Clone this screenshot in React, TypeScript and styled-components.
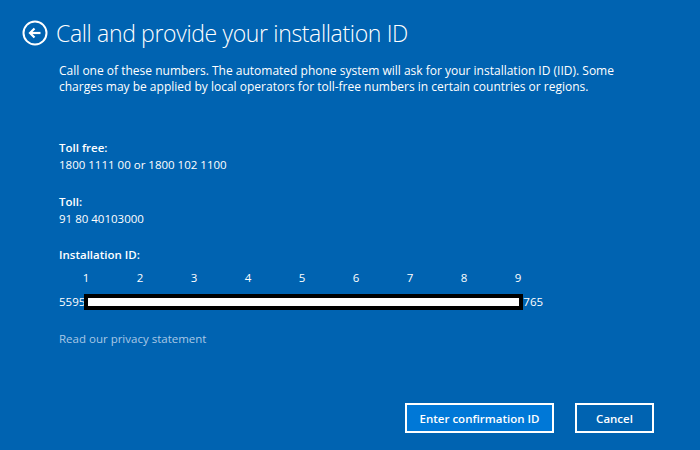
import React from 'react'
import styled, { createGlobalStyle } from 'styled-components'

const GlobalStyle = createGlobalStyle`
    html, body {
        margin: 0;
        padding: 0;
        background: #0063b1;
    }
    body {
        font-family: 'Open Sans', 'Noto Sans', sans-serif;
        color: #ffffff;
    }
`

// Styled Components
const Page = styled.div`
    width: 700px;
    height: 450px;
    box-sizing: border-box;
    display: flex;
    flex-direction: column;
    background: #0063b1;
    padding: 19px 0 0 0;
    overflow: hidden;
`

const Header = styled.div`
    display: flex;
    flex-direction: row;
    align-items: center;
    gap: 8px;
    padding-left: 22px;
    height: 28px;
`

const BackButton = styled.button`
    display: flex;
    align-items: center;
    justify-content: center;
    width: 26px;
    height: 26px;
    padding: 0;
    border: none;
    background: transparent;
    cursor: pointer;
`

const Title = styled.h1`
    margin: 0;
    font-size: 23px;
    font-weight: 300;
    line-height: 28px;
    letter-spacing: -0.35px;
    white-space: nowrap;
`

const Content = styled.div`
    display: flex;
    flex-direction: column;
    padding-left: 59px;
    padding-right: 40px;
`

const Intro = styled.p`
    margin: 16px 0 0 0;
    font-size: 12px;
    line-height: 15.5px;
    max-width: 585px;
`

const Section = styled.div<{ $top: number }>`
    display: flex;
    flex-direction: column;
    margin-top: ${(p) => p.$top}px;
`

const Label = styled.div`
    font-size: 11.5px;
    font-weight: 600;
    line-height: 17px;
`

const Value = styled.div`
    font-size: 11.5px;
    line-height: 17px;
`

const GroupNumbers = styled.div`
    display: grid;
    grid-template-columns: repeat(9, 54px);
    margin-top: 6px;
    font-size: 11.5px;
    line-height: 17px;
`

const GroupNumber = styled.span`
    text-align: center;
`

const IdRow = styled.div`
    display: flex;
    flex-direction: row;
    align-items: center;
    margin-top: 7px;
    font-size: 11.5px;
    line-height: 17px;
`

const Redaction = styled.span`
    display: block;
    width: 439px;
    height: 16px;
    box-sizing: border-box;
    border: 4px solid #000000;
    background: #ffffff;
    margin-left: -1px;
`

const PrivacyLink = styled.a`
    margin-top: 20px;
    font-size: 11.5px;
    line-height: 17px;
    color: #a9c8e6;
    text-decoration: none;
    align-self: flex-start;
`

const Footer = styled.div`
    display: flex;
    flex-direction: row;
    justify-content: flex-end;
    gap: 21px;
    margin-top: auto;
    padding: 0 46px 17px 0;
`

const Button = styled.button<{ $primary?: boolean }>`
    height: 30px;
    min-width: ${(p) => (p.$primary ? 149 : 79)}px;
    padding: 0 10px;
    box-sizing: border-box;
    border: 2px solid #ffffff;
    background: ${(p) => (p.$primary ? '#0078d7' : '#0063b1')};
    color: #ffffff;
    font-family: 'Open Sans', 'Noto Sans', sans-serif;
    font-size: 11.5px;
    font-weight: 600;
    cursor: pointer;
`

const BackIcon = () => (
    <svg width="26" height="26" viewBox="0 0 26 26" fill="none">
        <circle cx="13" cy="13" r="11.5" stroke="#ffffff" strokeWidth="2" />
        <path d="M18.5 13H8.5" stroke="#ffffff" strokeWidth="2.2" />
        <path d="M12.5 8.5L8 13L12.5 17.5" stroke="#ffffff" strokeWidth="2.2" />
    </svg>
)

const App: React.FC = (): JSX.Element => {
    const groups = [1, 2, 3, 4, 5, 6, 7, 8, 9]

    return (
        <>
            <GlobalStyle />
            <Page>
                <Header>
                    <BackButton aria-label="Back">
                        <BackIcon />
                    </BackButton>
                    <Title>Call and provide your installation ID</Title>
                </Header>
                <Content>
                    <Intro>
                        Call one of these numbers. The automated phone system will ask for your
                        installation ID (IID). Some charges may be applied by local operators for
                        toll-free numbers in certain countries or regions.
                    </Intro>
                    <Section $top={45}>
                        <Label>Toll free:</Label>
                        <Value>1800 1111 00 or 1800 102 1100</Value>
                    </Section>
                    <Section $top={20}>
                        <Label>Toll:</Label>
                        <Value>91 80 40103000</Value>
                    </Section>
                    <Section $top={19}>
                        <Label>Installation ID:</Label>
                        <GroupNumbers>
                            {groups.map((g) => (
                                <GroupNumber key={g}>{g}</GroupNumber>
                            ))}
                        </GroupNumbers>
                        <IdRow>
                            <span>5595</span>
                            <Redaction />
                            <span>765</span>
                        </IdRow>
                    </Section>
                    <PrivacyLink href="#">Read our privacy statement</PrivacyLink>
                </Content>
                <Footer>
                    <Button $primary>Enter confirmation ID</Button>
                    <Button>Cancel</Button>
                </Footer>
            </Page>
        </>
    )
}

export default App
